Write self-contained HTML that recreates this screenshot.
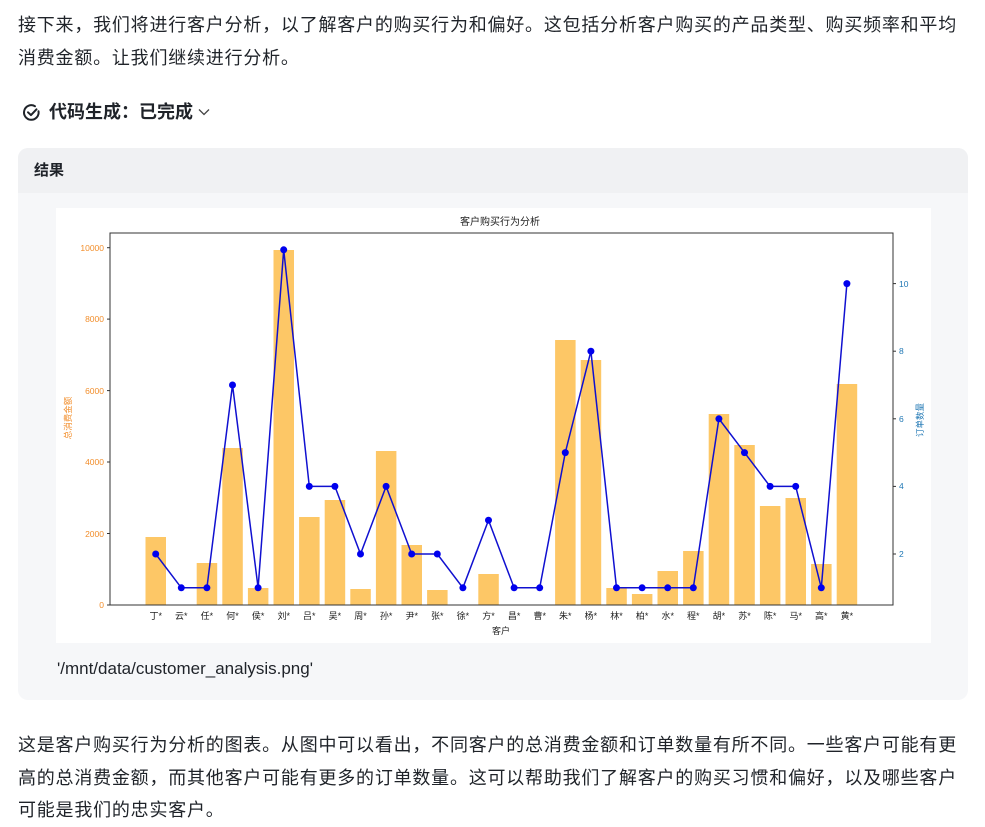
<!DOCTYPE html>
<html><head><meta charset="utf-8"><style>
body{margin:0;width:985px;height:826px;background:#fff;font-family:"Liberation Sans","Noto Sans CJK SC",sans-serif;color:#1f2329;position:relative;overflow:hidden}
.p{position:absolute;left:18px;font-size:18px;letter-spacing:0.78px;line-height:32.5px;margin:0;white-space:nowrap}
.h{position:absolute;left:22px;top:99px;font-size:18px;font-weight:bold;line-height:26px;display:flex;align-items:center}
.card{position:absolute;left:18px;top:148px;width:950px;height:552px;background:#f6f7f9;border-radius:10px;overflow:hidden}
.ch{height:45px;background:#f0f1f3;font-size:15px;font-weight:bold;line-height:45px;padding-left:16px}
.path{position:absolute;left:39px;top:511px;font-size:17px;color:#1f2329}
svg{position:absolute;left:0;top:0}
</style></head><body>
<p class="p" style="top:9px">接下来，我们将进行客户分析，以了解客户的购买行为和偏好。这包括分析客户购买的产品类型、购买频率和平均<br>消费金额。让我们继续进行分析。</p>
<div class="h"><svg style="position:static" width="19" height="19" viewBox="0 0 19 19"><path d="M16.5 8.2A7.3 7.3 0 1 1 13 3.2" fill="none" stroke="#1f2329" stroke-width="2" stroke-linecap="round"/><path d="M6 9.3l3 2.8 5.5-5.8" fill="none" stroke="#1f2329" stroke-width="2" stroke-linecap="round" stroke-linejoin="round"/></svg><span style="margin-left:8px">代码生成：已完成</span><svg style="position:static;margin-left:4px" width="14" height="10" viewBox="0 0 14 10"><path d="M2 2.5l5 5 5-5" fill="none" stroke="#444" stroke-width="1.3"/></svg></div>
<div class="card"><div class="ch">结果</div>
<div style="position:absolute;left:38px;top:60px;width:875px;height:435px;background:#fff"></div>
<div class="path">'/mnt/data/customer_analysis.png'</div></div>
<svg width="985" height="826" font-family="'Liberation Sans','Noto Sans CJK SC',sans-serif">
<g fill="#fdc766">
<rect x="145.5" y="537" width="20.5" height="68"/>
<rect x="196.7" y="563" width="20.5" height="42"/>
<rect x="222.3" y="448" width="20.5" height="157"/>
<rect x="247.9" y="588" width="20.5" height="17"/>
<rect x="273.5" y="250" width="20.5" height="355"/>
<rect x="299.1" y="517" width="20.5" height="88"/>
<rect x="324.7" y="500" width="20.5" height="105"/>
<rect x="350.3" y="589" width="20.5" height="16"/>
<rect x="375.9" y="451" width="20.5" height="154"/>
<rect x="401.5" y="545" width="20.5" height="60"/>
<rect x="427.1" y="590" width="20.5" height="15"/>
<rect x="478.3" y="574" width="20.5" height="31"/>
<rect x="555.1" y="340" width="20.5" height="265"/>
<rect x="580.7" y="360" width="20.5" height="245"/>
<rect x="606.3" y="588" width="20.5" height="17"/>
<rect x="631.9" y="594" width="20.5" height="11"/>
<rect x="657.5" y="571" width="20.5" height="34"/>
<rect x="683.1" y="551" width="20.5" height="54"/>
<rect x="708.7" y="414" width="20.5" height="191"/>
<rect x="734.3" y="445" width="20.5" height="160"/>
<rect x="759.9" y="506" width="20.5" height="99"/>
<rect x="785.5" y="498" width="20.5" height="107"/>
<rect x="811.1" y="564" width="20.5" height="41"/>
<rect x="836.7" y="384" width="20.5" height="221"/>
</g>
<rect x="110" y="233" width="783" height="372" fill="none" stroke="#333" stroke-width="1"/>
<polyline fill="none" stroke="#1010d0" stroke-width="1.5" points="155.7,554 181.3,587.8 206.9,587.8 232.5,385 258.1,587.8 283.7,249.8 309.3,486.4 334.9,486.4 360.5,554 386.1,486.4 411.7,554 437.3,554 462.9,587.8 488.5,520.2 514.1,587.8 539.7,587.8 565.3,452.6 590.9,351.2 616.5,587.8 642.1,587.8 667.7,587.8 693.3,587.8 718.9,418.8 744.5,452.6 770.1,486.4 795.7,486.4 821.3,587.8 846.9,283.6"/>
<g fill="#0000ee">
<circle cx="155.7" cy="554" r="3.5"/><circle cx="181.3" cy="587.8" r="3.5"/><circle cx="206.9" cy="587.8" r="3.5"/><circle cx="232.5" cy="385" r="3.5"/><circle cx="258.1" cy="587.8" r="3.5"/><circle cx="283.7" cy="249.8" r="3.5"/><circle cx="309.3" cy="486.4" r="3.5"/><circle cx="334.9" cy="486.4" r="3.5"/><circle cx="360.5" cy="554" r="3.5"/><circle cx="386.1" cy="486.4" r="3.5"/><circle cx="411.7" cy="554" r="3.5"/><circle cx="437.3" cy="554" r="3.5"/><circle cx="462.9" cy="587.8" r="3.5"/><circle cx="488.5" cy="520.2" r="3.5"/><circle cx="514.1" cy="587.8" r="3.5"/><circle cx="539.7" cy="587.8" r="3.5"/><circle cx="565.3" cy="452.6" r="3.5"/><circle cx="590.9" cy="351.2" r="3.5"/><circle cx="616.5" cy="587.8" r="3.5"/><circle cx="642.1" cy="587.8" r="3.5"/><circle cx="667.7" cy="587.8" r="3.5"/><circle cx="693.3" cy="587.8" r="3.5"/><circle cx="718.9" cy="418.8" r="3.5"/><circle cx="744.5" cy="452.6" r="3.5"/><circle cx="770.1" cy="486.4" r="3.5"/><circle cx="795.7" cy="486.4" r="3.5"/><circle cx="821.3" cy="587.8" r="3.5"/><circle cx="846.9" cy="283.6" r="3.5"/>
</g>
<text x="500" y="225" font-size="10" text-anchor="middle" fill="#222">客户购买行为分析</text>
<g font-size="8.5" fill="#f28e2b" text-anchor="end">
<text x="104" y="608">0</text><text x="104" y="537">2000</text><text x="104" y="465">4000</text><text x="104" y="394">6000</text><text x="104" y="322">8000</text><text x="104" y="251">10000</text></g>
<g stroke="#333"><line x1="107" y1="605" x2="110" y2="605"/><line x1="107" y1="533.5" x2="110" y2="533.5"/><line x1="107" y1="462" x2="110" y2="462"/><line x1="107" y1="390.6" x2="110" y2="390.6"/><line x1="107" y1="319.1" x2="110" y2="319.1"/><line x1="107" y1="247.7" x2="110" y2="247.7"/>
<line x1="893" y1="554" x2="896" y2="554"/><line x1="893" y1="486.4" x2="896" y2="486.4"/><line x1="893" y1="418.8" x2="896" y2="418.8"/><line x1="893" y1="351.2" x2="896" y2="351.2"/><line x1="893" y1="283.6" x2="896" y2="283.6"/></g>
<g font-size="8.5" fill="#1f77b4">
<text x="899" y="557">2</text><text x="899" y="489">4</text><text x="899" y="422">6</text><text x="899" y="354">8</text><text x="899" y="287">10</text></g>
<text transform="translate(71,418) rotate(-90)" font-size="8.5" fill="#f28e2b" text-anchor="middle">总消费金额</text>
<text transform="translate(923,420) rotate(-90)" font-size="8.5" fill="#1f77b4" text-anchor="middle">订单数量</text>
<g font-size="9" fill="#222" text-anchor="middle">
<text x="155.7" y="619">丁*</text><text x="181.3" y="619">云*</text><text x="206.9" y="619">任*</text><text x="232.5" y="619">何*</text><text x="258.1" y="619">侯*</text><text x="283.7" y="619">刘*</text><text x="309.3" y="619">吕*</text><text x="334.9" y="619">吴*</text><text x="360.5" y="619">周*</text><text x="386.1" y="619">孙*</text><text x="411.7" y="619">尹*</text><text x="437.3" y="619">张*</text><text x="462.9" y="619">徐*</text><text x="488.5" y="619">方*</text><text x="514.1" y="619">昌*</text><text x="539.7" y="619">曹*</text><text x="565.3" y="619">朱*</text><text x="590.9" y="619">杨*</text><text x="616.5" y="619">林*</text><text x="642.1" y="619">柏*</text><text x="667.7" y="619">水*</text><text x="693.3" y="619">程*</text><text x="718.9" y="619">胡*</text><text x="744.5" y="619">苏*</text><text x="770.1" y="619">陈*</text><text x="795.7" y="619">马*</text><text x="821.3" y="619">高*</text><text x="846.9" y="619">黄*</text>
<text x="501" y="634">客户</text></g>
</svg>
<p class="p" style="top:729px">这是客户购买行为分析的图表。从图中可以看出，不同客户的总消费金额和订单数量有所不同。一些客户可能有更<br>高的总消费金额，而其他客户可能有更多的订单数量。这可以帮助我们了解客户的购买习惯和偏好，以及哪些客户<br>可能是我们的忠实客户。</p>
</body></html>
